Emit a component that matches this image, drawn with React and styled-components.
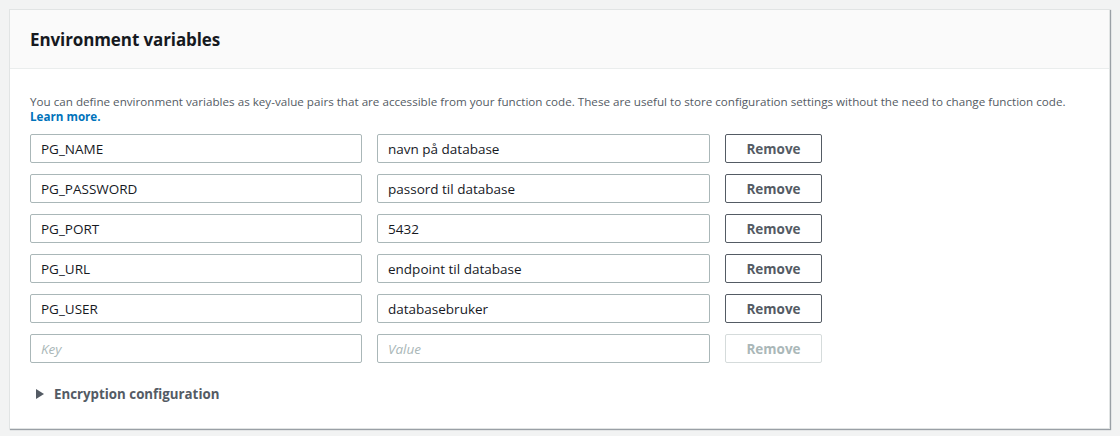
import React from "react";
import styled, { createGlobalStyle } from "styled-components";

const GlobalStyle = createGlobalStyle`
  body {
    margin: 0;
    background: #f2f3f3;
    font-family: "Open Sans", "Liberation Sans", sans-serif;
  }
`;

const Page = styled.div`
  padding: 9px 10px 7px 9px;
`;

const Card = styled.section`
  background: #fff;
  border: 1px solid #e1e4e4;
  box-shadow: 1px 1px 1px #9aa0a6;
`;

const Header = styled.header`
  height: 58px;
  display: flex;
  align-items: center;
  padding: 0 20px;
  background: #fafafa;
  border-bottom: 1px solid #eaeded;
`;

const Title = styled.h2`
  margin: 0;
  font-size: 17px;
  font-weight: 700;
  color: #16191f;
  letter-spacing: -0.1px;
`;

const Body = styled.div`
  padding: 25px 20px 25px;
`;

const Description = styled.p`
  margin: 0 0 10px;
  font-size: 11.65px;
  line-height: 15px;
  color: #545b64;
`;

const LearnMore = styled.a`
  display: block;
  color: #0073bb;
  font-weight: 700;
  text-decoration: none;
`;

const Rows = styled.div`
  display: flex;
  flex-direction: column;
  gap: 11px;
`;

const Row = styled.div`
  display: grid;
  grid-template-columns: 332px 333px 97px;
  column-gap: 15px;
`;

const Field = styled.input`
  box-sizing: border-box;
  height: 29px;
  padding: 0 10px;
  border: 1px solid #aab7b8;
  border-radius: 2px;
  font-family: inherit;
  font-size: 13.5px;
  color: #16191f;
  outline: none;
  &::placeholder {
    color: #aab7b8;
    font-style: italic;
  }
`;

const RemoveButton = styled.button`
  box-sizing: border-box;
  height: 29px;
  border: 1px solid ${(p) => (p.disabled ? "#d5dbdb" : "#545b64")};
  border-radius: 2px;
  background: #fff;
  font-family: inherit;
  font-size: 13.5px;
  font-weight: 700;
  color: ${(p) => (p.disabled ? "#aab7b8" : "#545b64")};
`;

const Expander = styled.div`
  display: flex;
  align-items: center;
  gap: 10px;
  height: 19px;
  margin-top: 21px;
  padding-left: 6px;
  font-size: 13.3px;
  font-weight: 700;
  color: #545b64;
`;

const Caret = styled.span`
  width: 0;
  height: 0;
  border-top: 5px solid transparent;
  border-bottom: 5px solid transparent;
  border-left: 8px solid #545b64;
`;

const vars = [
  ["PG_NAME", "navn på database"],
  ["PG_PASSWORD", "passord til database"],
  ["PG_PORT", "5432"],
  ["PG_URL", "endpoint til database"],
  ["PG_USER", "databasebruker"],
];

export default function App() {
  return (
    <Page>
      <GlobalStyle />
      <Card>
        <Header>
          <Title>Environment variables</Title>
        </Header>
        <Body>
          <Description>
            You can define environment variables as key-value pairs that are
            accessible from your function code. These are useful to store
            configuration settings without the need to change function code.
            <LearnMore href="#">Learn more.</LearnMore>
          </Description>
          <Rows>
            {vars.map(([k, v]) => (
              <Row key={k}>
                <Field defaultValue={k} />
                <Field defaultValue={v} />
                <RemoveButton>Remove</RemoveButton>
              </Row>
            ))}
            <Row>
              <Field placeholder="Key" />
              <Field placeholder="Value" />
              <RemoveButton disabled>Remove</RemoveButton>
            </Row>
          </Rows>
          <Expander>
            <Caret />
            Encryption configuration
          </Expander>
        </Body>
      </Card>
    </Page>
  );
}
